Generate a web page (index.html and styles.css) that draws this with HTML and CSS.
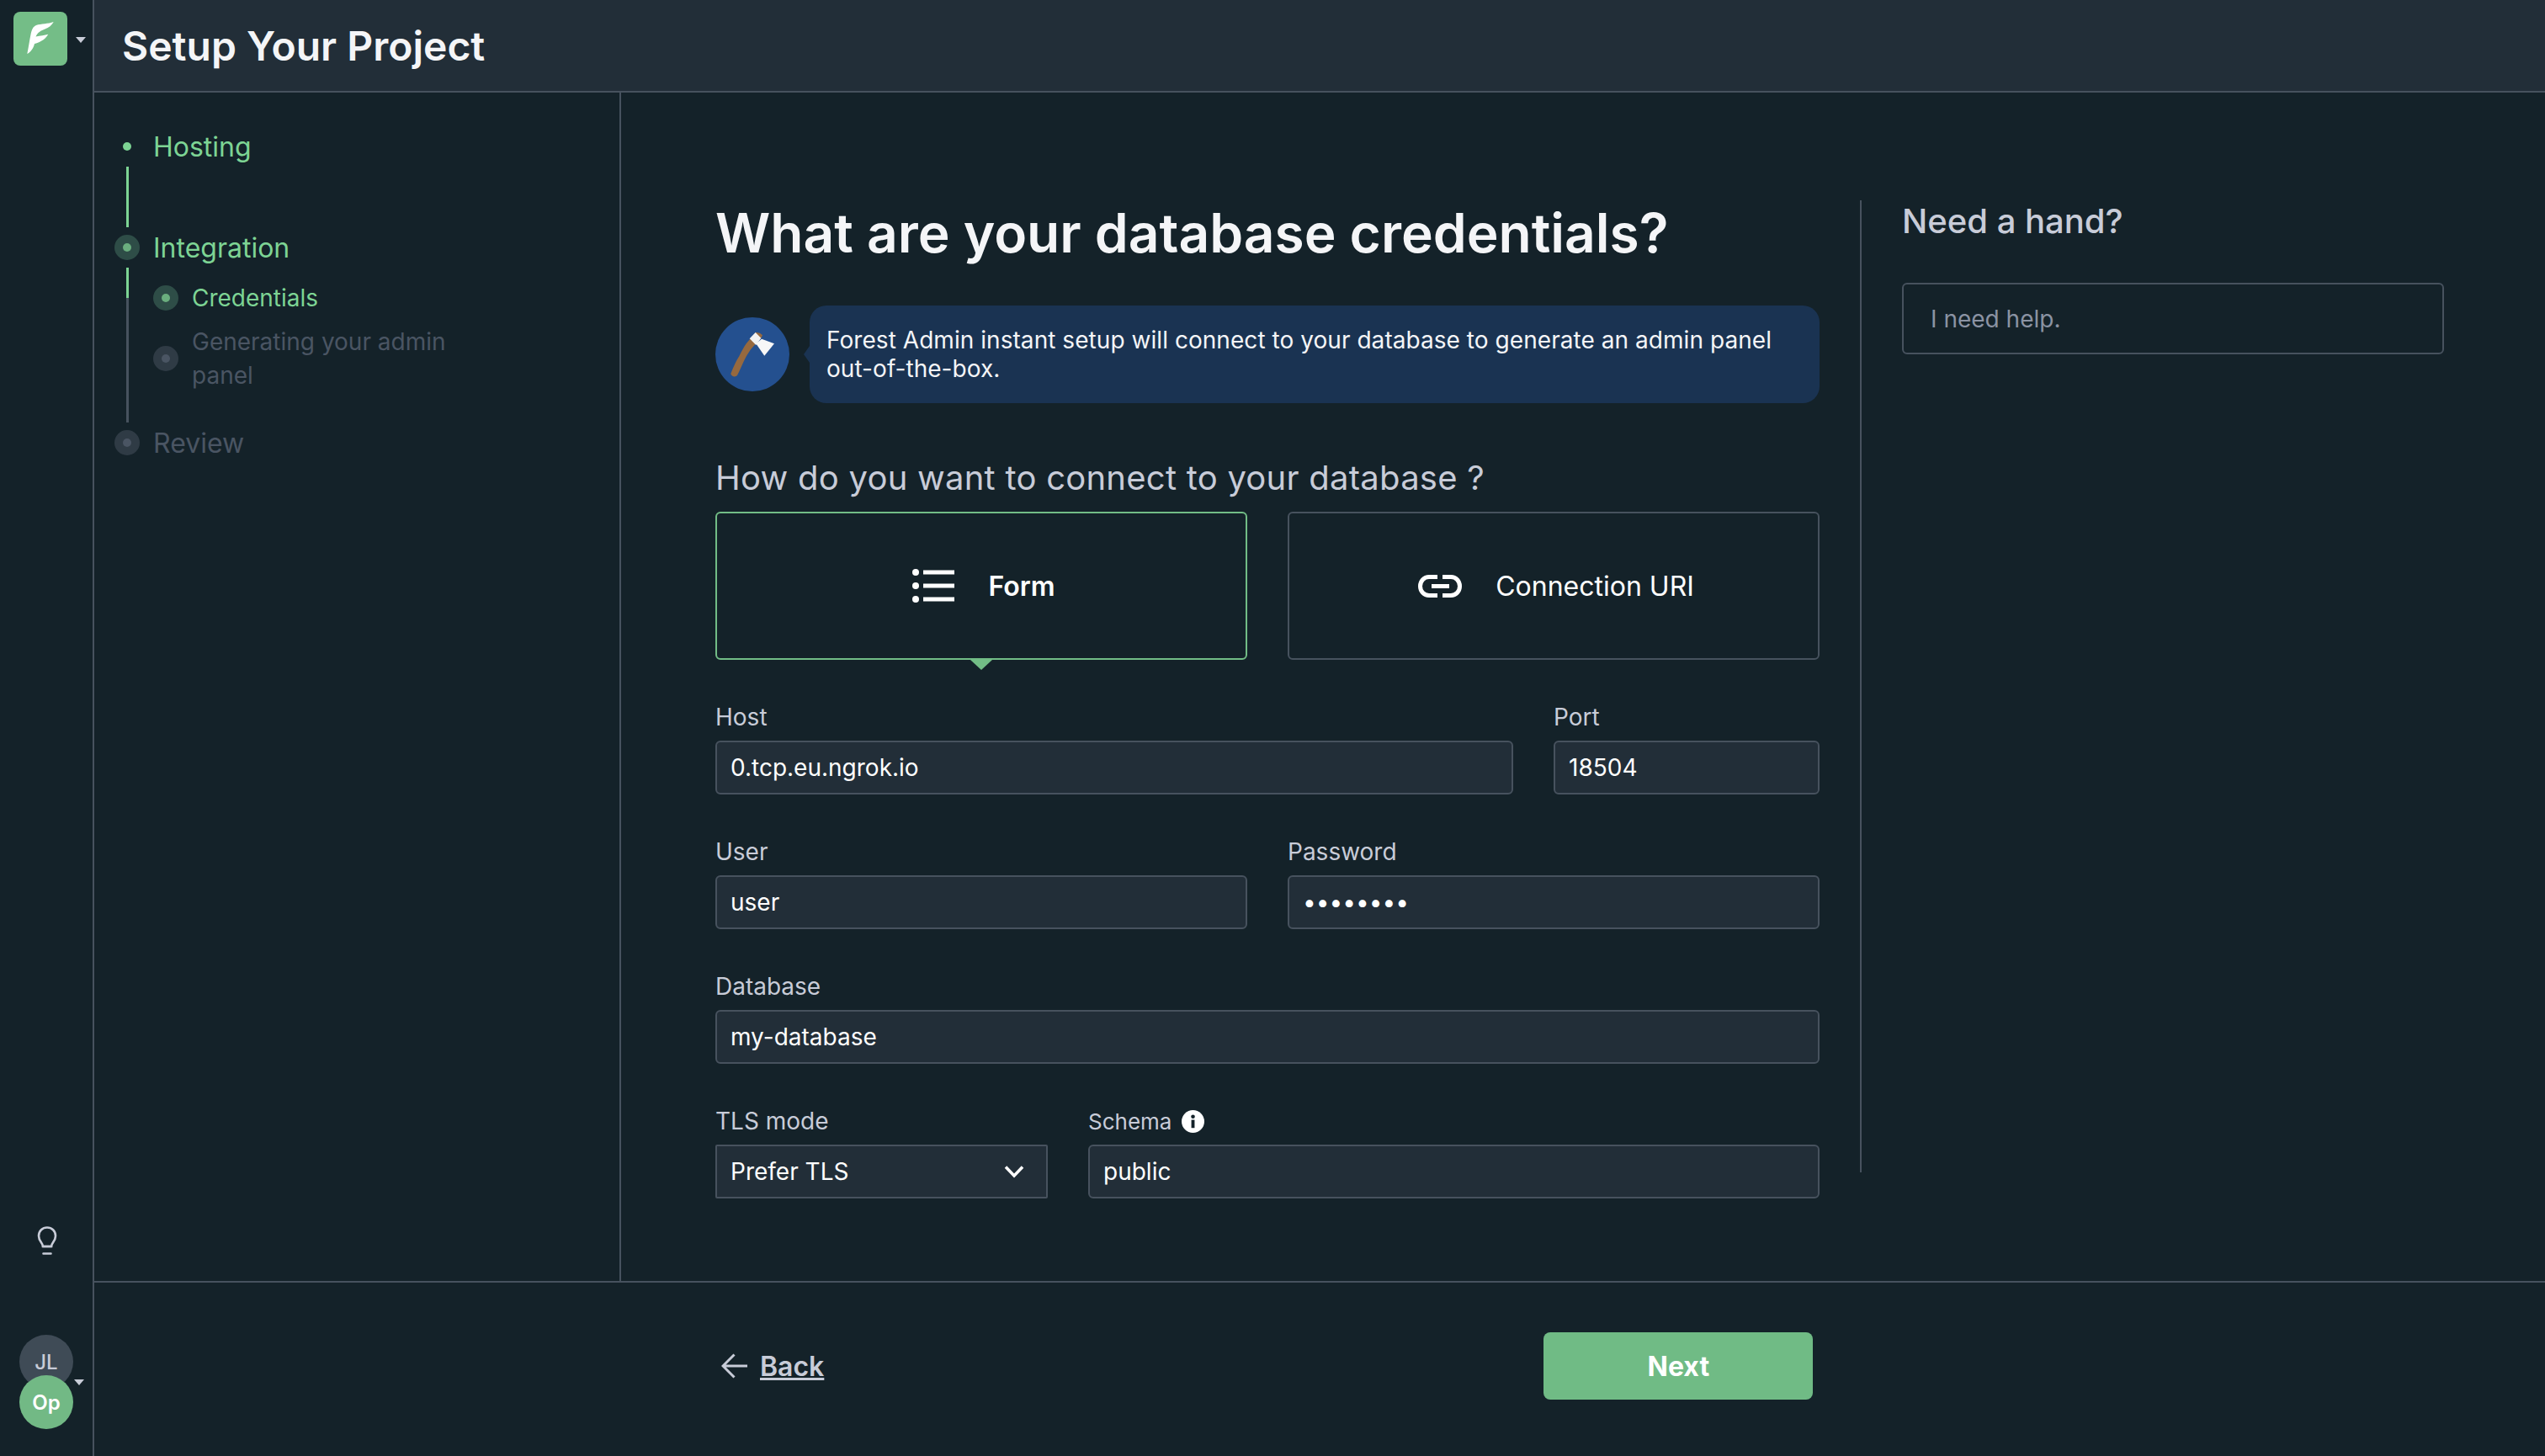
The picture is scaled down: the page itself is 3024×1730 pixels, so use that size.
FILE: index.html
```html
<!DOCTYPE html>
<html>
<head>
    <title>Setup Your Project</title>
    <link rel="stylesheet" href="styles.css">
</head>
<body>
<div class="app">
    <nav class="rail">
        <div class="rail-top">
            <div class="logo">
                <svg width="64" height="64" viewBox="0 0 64 64">
                    <path fill="#fff" d="M47.700 12C41 14.500 33 14 27 16C23 17.500 21.500 22 20.500 27C19 34 18 42 16.300 50C20 48 23.500 44 25 38C30 36.500 37 34 41.300 26.700C37 28 32 28.500 26.500 29.500C28 25 33 22 37.500 20.500C42 19 45.500 16 47.700 12Z"/>
                </svg>
            </div>
            <span class="caret caret-logo"></span>
        </div>
        <div class="rail-bottom">
            <svg class="bulb" width="24" height="34" viewBox="0 0 24 34" fill="none" stroke="#c8ccd8" stroke-width="2.600">
                <path d="M7 24C7 20 2 18 2 11.500C2 5.500 6.500 1.500 12 1.500C17.500 1.500 22 5.500 22 11.500C22 18 17 20 17 24Z"/>
                <path d="M7 24H17M7.500 32.500H16.500" stroke-linecap="round"/>
            </svg>
            <div class="avatars">
                <span class="avatar avatar-user">JL</span>
                <span class="avatar avatar-project">Op</span>
                <span class="caret caret-avatar"></span>
            </div>
        </div>
    </nav>

    <div class="page">
        <header class="topbar">
            <h2 class="topbar-title">Setup Your Project</h2>
        </header>

        <div class="body">
            <aside class="sidebar">
                <div class="step done">
                    <span class="marker"><span class="dot-small"></span></span>
                    <span>Hosting</span>
                </div>
                <div class="step-line"></div>
                <div class="step active">
                    <span class="marker"><span class="ring"><span class="ring-dot"></span></span></span>
                    <span>Integration</span>
                </div>
                <div class="substeps">
                    <div class="substeps-line">
                        <div class="line-green"></div>
                        <div class="line-grey"></div>
                    </div>
                    <div class="substeps-list">
                        <div class="substep active">
                            <span class="ring"><span class="ring-dot"></span></span>
                            <span>Credentials</span>
                        </div>
                        <div class="substep muted">
                            <span class="ring"><span class="ring-dot"></span></span>
                            <span class="substep-long">Generating your admin panel</span>
                        </div>
                    </div>
                </div>
                <div class="step muted">
                    <span class="marker"><span class="ring"><span class="ring-dot"></span></span></span>
                    <span>Review</span>
                </div>
            </aside>

            <main class="main">
                <section class="wizard">
                    <h1 class="title">What are your database credentials?</h1>

                    <div class="intro">
                        <div class="axe-avatar">
                            <svg width="88" height="88" viewBox="0 0 88 88">
                                <path d="M18.300 67C22 58 25 51 28.300 46.300C31 41 33.500 36 36.700 31.300L47.700 18C50 17.500 54 18.500 56 21.300L54.300 24.700L45 34.700C41 39 38 44 35 49.700C32 56 29 63 26 69C24 71.500 19 70.500 18.300 67Z" fill="#96693f"/>
                                <path d="M40.700 25.300L47.700 18L54.300 24.700L48.300 33Z" fill="#f2f2f2"/>
                                <path d="M55 25.700L70 31.300L58.300 45.700L48.300 31.300Z" fill="#f7f7f7"/>
                            </svg>
                        </div>
                        <div class="bubble">Forest Admin instant setup will connect to your database to generate an admin panel out-of-the-box.</div>
                    </div>

                    <h3 class="question">How do you want to connect to your database ?</h3>

                    <div class="tabs">
                        <div class="tab tab-selected">
                            <svg width="50" height="40" viewBox="0 0 50 40" fill="#fff">
                                <circle cx="4" cy="4" r="4"/><circle cx="4" cy="20" r="4"/><circle cx="4" cy="36" r="4"/>
                                <rect x="13" y="1.500" width="37" height="5"/><rect x="13" y="17.500" width="37" height="5"/><rect x="13" y="33.500" width="37" height="5"/>
                            </svg>
                            <span>Form</span>
                        </div>
                        <div class="tab">
                            <svg width="52" height="27" viewBox="0 0 52 27" fill="none" stroke="#fff" stroke-width="5">
                                <path d="M23 2.500H13C7 2.500 2.500 7.500 2.500 13.500C2.500 19.500 7 24.500 13 24.500H23"/>
                                <path d="M29 2.500H39C45 2.500 49.500 7.500 49.500 13.500C49.500 19.500 45 24.500 39 24.500H29"/>
                                <path d="M16 13.500H37"/>
                            </svg>
                            <span>Connection URI</span>
                        </div>
                    </div>

                    <form class="fields">
                        <div class="row">
                            <div class="field grow"><label>Host</label><input type="text" value="0.tcp.eu.ngrok.io"></div>
                            <div class="field port"><label>Port</label><input type="text" value="18504"></div>
                        </div>
                        <div class="row">
                            <div class="field half"><label>User</label><input type="text" value="user"></div>
                            <div class="field half"><label>Password</label><input type="password" value="password"></div>
                        </div>
                        <div class="row">
                            <div class="field grow"><label>Database</label><input type="text" value="my-database"></div>
                        </div>
                        <div class="row">
                            <div class="field tls">
                                <label>TLS mode</label>
                                <div class="select">
                                    <span>Prefer TLS</span>
                                    <svg width="24" height="16" viewBox="0 0 24 16" fill="none" stroke="#fff" stroke-width="3.500"><path d="M2 2.500L12 13L22 2.500"/></svg>
                                </div>
                            </div>
                            <div class="field grow">
                                <label class="label-info">Schema
                                    <svg width="27" height="27" viewBox="0 0 28 28"><circle cx="14" cy="14" r="14" fill="#fff"/><rect x="12" y="12" width="4" height="10" fill="#142229"/><circle cx="14" cy="8" r="2.400" fill="#142229"/></svg>
                                </label>
                                <input type="text" value="public">
                            </div>
                        </div>
                    </form>
                </section>

                <aside class="help">
                    <h3 class="help-title">Need a hand?</h3>
                    <div class="help-box">I need help.</div>
                </aside>
            </main>
        </div>

        <footer class="footer">
            <a class="back">
                <svg width="32" height="30" viewBox="0 0 32 30" fill="none" stroke="#c8ccd8" stroke-width="3"><path d="M15.500 1.500L2 15L15.500 28.500M2 15H31"/></svg>
                <span>Back</span>
            </a>
            <button class="next" type="button">Next</button>
        </footer>
    </div>
</div>
</body>
</html>
```

FILE: styles.css
```css
* {
    box-sizing: border-box;
}
html, body {
    margin: 0;
    height: 100%;
}
body {
    background-color: #142229;
    color: #c8ccd8;
    font-family: Inter, "Noto Sans", sans-serif;
    font-size: 28px;
}
.app {
    display: flex;
    height: 1730px;
}

/* left rail */
.rail {
    width: 112px;
    flex-shrink: 0;
    border-right: 2px solid #47525e;
    display: flex;
    flex-direction: column;
    justify-content: space-between;
}
.rail-top {
    display: flex;
    align-items: center;
    padding: 14px 0 0 16px;
}
.logo {
    width: 64px;
    height: 64px;
    border-radius: 8px;
    background-color: #74bd87;
}
.caret {
    width: 0;
    height: 0;
    border-left: 6.5px solid transparent;
    border-right: 6.5px solid transparent;
    border-top: 7px solid #c8ccd8;
}
.caret-logo {
    margin-left: 10px;
    margin-top: 2px;
}
.rail-bottom {
    display: flex;
    flex-direction: column;
    align-items: center;
    padding-bottom: 32px;
}
.bulb {
    margin: 0 0 95px 2px;
}
.avatars {
    width: 64px;
    display: flex;
    flex-direction: column;
    position: relative;
}
.avatar {
    width: 64px;
    height: 64px;
    border-radius: 50%;
    display: flex;
    align-items: center;
    justify-content: center;
    font-size: 24px;
}
.avatar-user {
    background-color: #3f4b56;
    font-weight: 500;
}
.avatar-project {
    background-color: #72b985;
    color: #fff;
    font-weight: 600;
    margin-top: -16px;
    position: relative;
}
.caret-avatar {
    position: absolute;
    left: 65px;
    top: 53px;
}

/* top bar */
.page {
    flex: 1;
    display: flex;
    flex-direction: column;
    min-width: 0;
}
.topbar {
    height: 110px;
    flex-shrink: 0;
    background-color: #222e38;
    border-bottom: 2px solid #47525e;
    display: flex;
    align-items: center;
    padding-left: 33px;
}
.topbar-title {
    margin: 0;
    color: #f4f5f7;
    font-size: 48px;
    font-weight: 600;
}
.body {
    flex: 1;
    display: flex;
    min-height: 0;
}

/* steps */
.sidebar {
    width: 626px;
    flex-shrink: 0;
    border-right: 2px solid #47525e;
    padding: 40px 0 0 24px;
}
.step {
    height: 48px;
    display: flex;
    align-items: center;
    font-size: 32px;
}
.marker {
    width: 30px;
    display: flex;
    justify-content: center;
    margin-right: 16px;
}
.done, .active {
    color: #7dd494;
}
.muted {
    color: #4a5563;
}
.dot-small {
    width: 10px;
    height: 10px;
    border-radius: 50%;
    background-color: #7dd494;
}
.ring {
    width: 30px;
    height: 30px;
    flex-shrink: 0;
    border-radius: 50%;
    display: flex;
    align-items: center;
    justify-content: center;
    background-color: #2e4d47;
}
.ring-dot {
    width: 10px;
    height: 10px;
    border-radius: 50%;
    background-color: #6aae7e;
}
.muted .ring {
    background-color: #2f3b45;
}
.muted .ring-dot {
    background-color: #4a5563;
}
.step-line {
    width: 3px;
    height: 72px;
    margin-left: 14px;
    background-color: #7dd494;
}
.substeps {
    display: flex;
    height: 184px;
}
.substeps-line {
    width: 3px;
    margin-left: 14px;
    display: flex;
    flex-direction: column;
}
.line-green {
    height: 36px;
    background-color: #7dd494;
}
.line-grey {
    flex: 1;
    background-color: #47525e;
}
.substeps-list {
    padding: 16px 0 0 29px;
    display: flex;
    flex-direction: column;
    gap: 12px;
}
.substep {
    display: flex;
    align-items: center;
    gap: 16px;
    font-size: 28px;
    line-height: 40px;
}
.substep-long {
    width: 340px;
}

/* wizard */
.main {
    flex: 1;
    display: flex;
    align-items: flex-start;
    padding: 128px 0 0 112px;
}
.wizard {
    width: 1312px;
    flex-shrink: 0;
}
.title {
    margin: 0 0 48px;
    padding-top: 1px;
    color: #f4f5f7;
    font-size: 64px;
    font-weight: 600;
    line-height: 76px;
}
.intro {
    display: flex;
    align-items: center;
    gap: 24px;
    margin-bottom: 65px;
}
.axe-avatar {
    width: 88px;
    height: 88px;
    flex-shrink: 0;
    border-radius: 50%;
    background-color: #24508f;
}
.bubble {
    flex: 1;
    height: 116px;
    padding: 24px 20px;
    border-radius: 20px;
    background-color: #1a3352;
    color: #f4f5f7;
    font-size: 28px;
    line-height: 34px;
    letter-spacing: 0.05px;
    position: relative;
}
.bubble::before {
    content: "";
    position: absolute;
    left: -7px;
    top: 48px;
    border-top: 10px solid transparent;
    border-bottom: 10px solid transparent;
    border-right: 7px solid #1a3352;
}
.question {
    margin: 0 0 16px;
    font-size: 40px;
    font-weight: 400;
    line-height: 48px;
    letter-spacing: 0.25px;
}
.tabs {
    display: flex;
    gap: 48px;
    margin-bottom: 48px;
}
.tab {
    flex: 1;
    height: 176px;
    padding-left: 6px;
    border: 2px solid #47525e;
    border-radius: 6px;
    display: flex;
    align-items: center;
    justify-content: center;
    gap: 40px;
    color: #fff;
    font-size: 32px;
    position: relative;
}
.tab-selected {
    border-color: #72bd86;
    font-weight: 600;
}
.tab-selected::after {
    content: "";
    position: absolute;
    left: 50%;
    bottom: -14px;
    margin-left: -13px;
    border-left: 13px solid transparent;
    border-right: 13px solid transparent;
    border-top: 12px solid #72bd86;
}

/* form fields */
.fields {
    display: flex;
    flex-direction: column;
    gap: 48px;
}
.row {
    display: flex;
    gap: 48px;
}
.field {
    display: flex;
    flex-direction: column;
    min-width: 0;
}
.grow {
    flex: 1;
}
.half {
    flex: 1;
}
.port {
    width: 316px;
}
.tls {
    width: 395px;
}
.field label {
    display: flex;
    align-items: center;
    gap: 10px;
    height: 40px;
    margin-bottom: 8px;
}
.field .label-info {
    gap: 12px;
    font-size: 26px;
}
.field input,
.select {
    width: 100%;
    height: 64px;
    padding: 0 16px;
    border: 2px solid #47525e;
    border-radius: 6px;
    background-color: #222e38;
    color: #fff;
    font-family: Inter, "Noto Sans", sans-serif;
    font-size: 28px;
}
.select {
    display: flex;
    align-items: center;
    justify-content: space-between;
    padding-right: 26px;
    border-radius: 2px;
}

/* help column */
.help {
    width: 694px;
    height: 1155px;
    margin-left: 48px;
    padding-left: 48px;
    border-left: 2px solid #47525e;
}
.help-title {
    margin: 0 0 48px;
    font-size: 40px;
    font-weight: 500;
    line-height: 50px;
}
.help-box {
    width: 644px;
    height: 85px;
    padding: 0 32px;
    border: 2px solid #47525e;
    border-radius: 6px;
    color: #8b93a3;
    display: flex;
    align-items: center;
}

/* footer */
.footer {
    height: 208px;
    flex-shrink: 0;
    border-top: 2px solid #47525e;
    padding: 0 0 8px 745px;
    display: flex;
    align-items: center;
}
.back {
    display: flex;
    align-items: center;
    gap: 14px;
    font-size: 32px;
    font-weight: 600;
}
.back span {
    text-decoration: underline;
}
.next {
    width: 320px;
    height: 80px;
    margin-left: 855px;
    border: none;
    border-radius: 8px;
    background-color: #70bb85;
    color: #fff;
    font-family: Inter, "Noto Sans", sans-serif;
    font-size: 32px;
    font-weight: 700;
}
```
